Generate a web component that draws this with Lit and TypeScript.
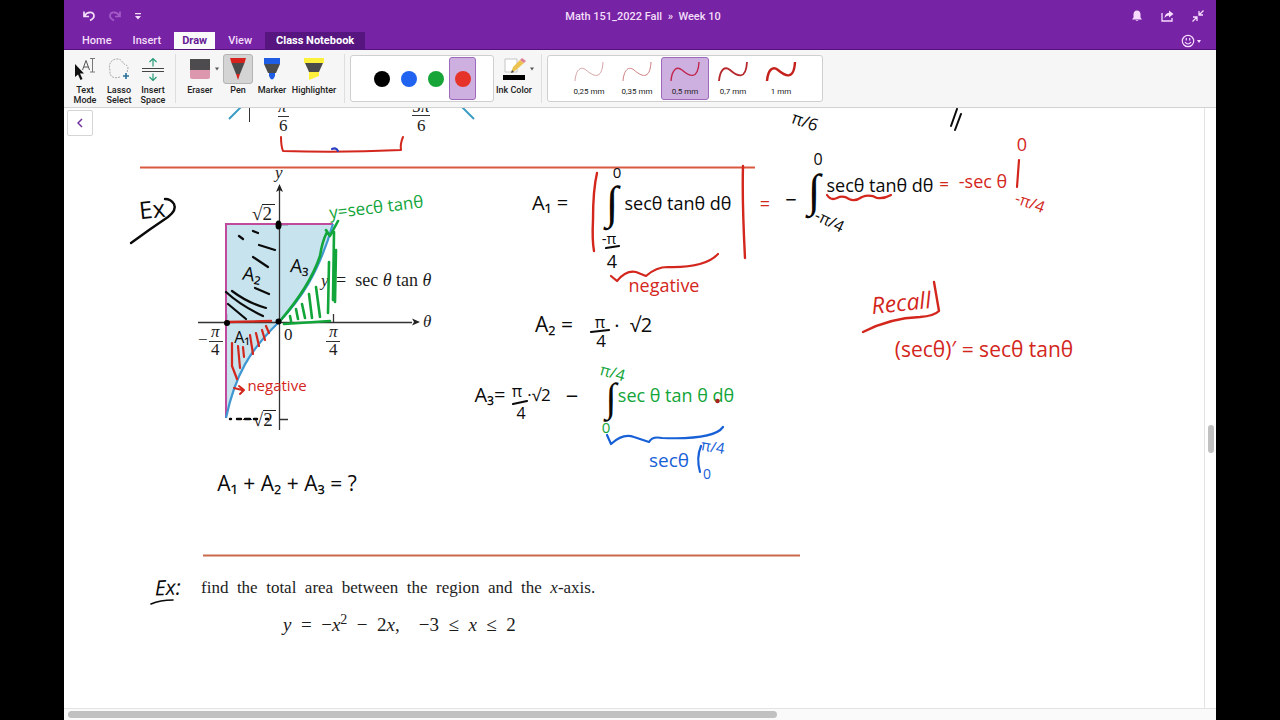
import { LitElement, html, svg, css } from "lit";
import { customElement, state } from "lit/decorators.js";

type Label = { x: number; y: number; s: number; t: string; c?: string; k?: string; r?: number };

const RED = "#d3261c";
const BLACK = "#0a0a0a";
const GREEN = "#12a53a";
const BLUE = "#1760d6";

// Handwritten labels: centre x, baseline y, size.
const INK: Label[] = [
  { x: 803, y: 127, s: 17, t: "π/6", r: 20 },
  { x: 153, y: 218, s: 24, t: "Ex", r: -6 },
  { x: 251, y: 281, s: 19, t: "A₂", r: 10 },
  { x: 299, y: 273, s: 19, t: "A₃", r: 6 },
  { x: 242, y: 343, s: 16, t: "A₁" },
  { x: 377, y: 213, s: 17, t: "y=secθ tanθ", c: GREEN, r: -7 },
  { x: 277, y: 391, s: 15, t: "negative", c: RED },
  { x: 287, y: 491, s: 21, t: "A₁ + A₂ + A₃ = ?" },
  { x: 550, y: 210, s: 20, t: "A₁ =" },
  { x: 617, y: 178, s: 15, t: "0" },
  { x: 678, y: 210, s: 18, t: "secθ tanθ dθ" },
  { x: 609, y: 244, s: 15, t: "-π" },
  { x: 612, y: 268, s: 18, t: "4" },
  { x: 664, y: 292, s: 18, t: "negative", c: RED },
  { x: 765, y: 210, s: 18, t: "=", c: RED },
  { x: 791, y: 207, s: 20, t: "−" },
  { x: 818, y: 165, s: 16, t: "0" },
  { x: 827, y: 226, s: 16, t: "-π/4", r: 26 },
  { x: 880, y: 192, s: 18, t: "secθ tanθ dθ" },
  { x: 944, y: 190, s: 17, t: "=", c: RED },
  { x: 983, y: 188, s: 18, t: "-sec θ", c: RED },
  { x: 1022, y: 151, s: 18, t: "0", c: RED },
  { x: 1028, y: 208, s: 16, t: "-π/4", c: RED, r: 20 },
  { x: 554, y: 332, s: 21, t: "A₂ =" },
  { x: 600, y: 328, s: 16, t: "π" },
  { x: 601, y: 347, s: 17, t: "4" },
  { x: 617, y: 333, s: 20, t: "·" },
  { x: 641, y: 332, s: 20, t: "√2" },
  { x: 490, y: 402, s: 20, t: "A₃=" },
  { x: 517, y: 397, s: 16, t: "π" },
  { x: 521, y: 419, s: 16, t: "4" },
  { x: 539, y: 401, s: 17, t: "·√2" },
  { x: 572, y: 404, s: 22, t: "−" },
  { x: 611, y: 378, s: 16, t: "π/4", c: GREEN, r: 16 },
  { x: 676, y: 402, s: 18, t: "sec θ tan θ dθ", c: GREEN },
  { x: 606, y: 433, s: 15, t: "0", c: GREEN },
  { x: 669, y: 467, s: 19, t: "secθ", c: BLUE },
  { x: 712, y: 452, s: 15, t: "π/4", c: BLUE, r: 10 },
  { x: 707, y: 479, s: 14, t: "0", c: BLUE },
  { x: 902, y: 311, s: 23, t: "Recall", c: RED, k: "slant", r: -6 },
  { x: 984, y: 357, s: 21, t: "(secθ)′ = secθ tanθ", c: RED },
  { x: 168, y: 595, s: 21, t: "Ex:", k: "thin slant", r: -2 },
];

// Printed labels, start-aligned.
const PRINT: Label[] = [
  { x: 278, y: 112, s: 17, t: "π", k: "it" },
  { x: 279, y: 131, s: 17, t: "6" },
  { x: 412, y: 112, s: 17, t: "5π" },
  { x: 417, y: 131, s: 17, t: "6" },
  { x: 275, y: 178, s: 17, t: "y", k: "it" },
  { x: 252, y: 220, s: 19, t: "√2" },
  { x: 242, y: 426, s: 19, t: "−√2" },
  { x: 321, y: 286, s: 17, t: "y", k: "it" },
  { x: 423, y: 327, s: 17, t: "θ", k: "it" },
  { x: 284, y: 340, s: 17, t: "0" },
  { x: 198, y: 345, s: 17, t: "−" },
  { x: 211, y: 337, s: 17, t: "π", k: "it" },
  { x: 211, y: 355, s: 17, t: "4" },
  { x: 329, y: 337, s: 17, t: "π", k: "it" },
  { x: 329, y: 355, s: 17, t: "4" },
];

// Pen strokes: path, colour, width.
const STROKES: [string, string, number][] = [
  ["M281 137Q281 146 283 151Q340 153 401 150Q400 144 403 137", RED, 2],
  ["M332 149Q336 147 338 151", "#2b3fc4", 2],
  ["M957 109L951 126M961 114L955 130", BLACK, 2],
  ["M131 243Q150 229 168 217Q177 210 174 204Q171 199 165 199", BLACK, 2.4],
  ["M239 236L243 239M253 231L258 233M259 245L275 250M253 257L268 267M255 288L269 294M232 291Q248 303 266 308M226 292Q240 305 263 316M228 304Q240 314 246 319", BLACK, 2.2],
  ["M327 232Q322 242 320 256Q310 286 280 321M326 230L330 236L338 221M334 232L333 300M336 250L335 302M329 262L328 313M316 287L320 317M309 294L312 318M302 304L305 318M296 309L298 319M290 316L291 321M284 324L330 321", GREEN, 2.6],
  ["M228 322L271 321", RED, 2.4],
  ["M232 343L232 366L237 379M238 346L240 368M243 347L244 357M250 335L253 354M256 333L259 346M262 330L265 340M266 326L269 333", RED, 2.2],
  ["M234 388L242 390M239 386L244 390L240 394", RED, 2],
  ["M230 419L231 419M237 419L241 419M245 419L250 419M254 419L257 419M266 419L268 419", BLACK, 2.4],
  ["M597 173Q593 190 593 220Q592 240 594 251", RED, 2.4],
  ["M743 166Q742 200 745 258", RED, 2.4],
  ["M606 248L619 246", BLACK, 2.2],
  ["M611 276L617 281Q626 270 636 272L646 276Q656 267 668 267Q705 268 718 254", RED, 2.2],
  ["M827 195Q831 201 837 198Q843 195 849 199Q855 202 862 197Q870 194 877 198Q884 199 891 195", RED, 2.2],
  ["M1019 160L1017 187", RED, 2.2],
  ["M591 332L609 330", BLACK, 2.2],
  ["M513 404L527 401", BLACK, 2.2],
  ["M607 435L611 444Q623 433 634 437L649 442Q652 436 662 438Q714 440 723 427", BLUE, 2.2],
  ["M701 446Q696 458 700 472", BLUE, 2.2],
  ["M863 332Q890 318 920 317Q934 316 939 311L934 282", RED, 2.4],
  ["M151 604Q160 600 173 600", BLACK, 1.6],
];

// Integral signs: x, y, size, colour.
const INTEGRALS: Label[] = [
  { x: 612, y: 218, s: 46, t: "∫" },
  { x: 814, y: 206, s: 46, t: "∫" },
  { x: 611, y: 411, s: 40, t: "∫" },
];

@customElement("app-root")
export class AppRoot extends LitElement {
  @state() tab = "Draw";
  @state() tool = "Pen";
  @state() ink = "Red";
  @state() nib = "0,5 mm";

  static styles = css`
    :host { display: block; }
    * { box-sizing: border-box; }
    button { font: inherit; color: inherit; background: none; border: 0; padding: 0; margin: 0; }
    svg { display: block; }
    .screen { height: 100vh; background: #000; padding: 0 5%; font-family: Roboto, "Liberation Sans", sans-serif; }
    .window { height: 100%; display: flex; flex-direction: column; background: #fff; overflow: hidden; }
    .head { background: #7723a5; color: #f3def9; border-bottom: 1px solid #511279; }
    .title { display: grid; grid-template-columns: 1fr auto 1fr; align-items: center; height: 32px; padding: 0 12px 0 18px; font-size: 11px; font-weight: 500; }
    .title h1 { margin: 0; font: inherit; }
    .group { display: flex; align-items: center; gap: 12px; }
    .end { justify-content: flex-end; gap: 18px; }
    .tabs { display: flex; align-items: stretch; height: 17px; padding: 0 14px 0 10px; font-size: 11px; font-weight: 500; }
    .tabs button { padding: 0 8px; line-height: 17px; margin-right: 5px; }
    .tabs .on { background: #fafafa; color: #671b96; font-weight: 700; }
    .tabs .class { background: #571580; color: #fff; padding: 0 11px; font-weight: 700; }
    .tabs .smile { margin-left: auto; margin-right: 0; padding: 0; }
    .ribbon { display: flex; height: 58px; flex: none; background: #f6f6f6; border-bottom: 1px solid #d2d2d2; padding: 4px 4px 0; font-size: 9px; line-height: 10px; color: #222; font-weight: 500; overflow: hidden; }
    .tool { display: flex; flex-direction: column; align-items: center; width: 34px; white-space: nowrap; }
    .tool .pic { height: 30px; width: 30px; display: grid; place-items: center; margin-bottom: 1px; border: 1px solid transparent; border-radius: 3px; }
    .tool.on .pic { background: #d4d4d4; border-color: #b4b4b4; }
    .tool.mid { width: 38px; }
    .tool.wide { width: 50px; }
    .tool.ink { width: 40px; }
    .rule { width: 1px; background: #dedede; margin: 0 5px 4px; }
    .caret { width: 6px; margin-left: -4px; padding-top: 13px; height: 20px; }
    .box { display: flex; align-items: center; height: 47px; background: #fff; border: 1px solid #cfcfcf; border-radius: 3px; margin-top: 1px; }
    .colors { padding: 0 17px; }
    .swatch { width: 27px; height: 43px; display: grid; place-items: center; border: 1px solid transparent; border-radius: 3px; }
    .dot { width: 16px; height: 16px; border-radius: 50%; }
    .nibs { padding: 0 17px; font-size: 8px; font-weight: 400; }
    .nib { width: 48px; height: 43px; display: flex; flex-direction: column; align-items: center; gap: 4px; border: 1px solid transparent; border-radius: 3px; padding-top: 1px; }
    .box .on { background: #cdb0e0; border-color: #9d69bd; }
    .work { flex: 1; display: flex; min-height: 0; }
    .page { flex: 1; min-width: 0; position: relative; }
    .canvas { width: 100%; height: 100%; overflow: hidden; }
    .back { position: absolute; left: 3px; top: 2px; width: 26px; height: 26px; background: #fff; border: 1px solid #d5d5d5; border-radius: 2px; display: grid; place-items: center; }
    .vbar { width: 12px; border-left: 1px solid #e3e3e3; display: grid; grid-template-rows: 316fr 28fr 255fr; justify-items: center; }
    .vthumb { grid-row: 2; width: 6px; background: #c1c1c1; border-radius: 3px; }
    .hbar { height: 12px; flex: none; border-top: 1px solid #e3e3e3; background: #fafafa; padding: 2px 4px; }
    .hthumb { width: 62%; height: 7px; background: #c1c1c1; border-radius: 4px; }
    .print { font-family: "Liberation Serif", serif; fill: #1c1c1c; white-space: pre; }
    .it { font-style: italic; }
    .hand { font-family: "Open Sans", sans-serif; font-weight: 500; text-anchor: middle; }
    .slant { font-style: italic; }
    .thin { font-weight: 400; }
    .int { font-family: "Liberation Serif", "DejaVu Serif", serif; text-anchor: middle; }
    .stroke { fill: none; stroke-linecap: round; stroke-linejoin: round; }
  `;

  private toolButton(name: string, lines: string[], pic: unknown, size = "") {
    return html`<button class="tool ${size} ${this.tool === name ? "on" : ""}" @click=${() => (this.tool = name)}>
      <span class="pic">${pic}</span>${lines.map((l) => html`<span>${l}</span>`)}
    </button>`;
  }

  private pen(fill: string, shape: string, body: string, tip: string) {
    return html`<svg width="22" height="24" viewBox="0 0 22 24">
      <path d=${body} fill="#4b4b4b" /><path d=${shape} fill=${fill} /><path d=${tip} fill=${fill} />
    </svg>`;
  }

  private caret(c: string) {
    return html`<svg width="4" height="4" viewBox="0 0 5 4"><path d="M0 0H5L2.5 4Z" fill=${c} /></svg>`;
  }

  private canvas() {
    return html`<svg class="canvas" role="img" aria-label="Notebook page">
      <g transform="translate(-64 -108)">
        <path d="M140 167.500H755" stroke="#d9593f" stroke-width="1.800" />
        <path d="M203 555.500H800" stroke="#c8694a" stroke-width="2" />
        <path d="M226 224H333C318 275 300 300 279 322C250 350 235 375 226 418Z" fill="#c6e3ee" />
        <path d="M249.500 107V122M278 116.500H289M412 115.500H430M209 341.500H223M326 341.500H340" stroke="#333" />
        <path d="M262 204.500H275M263 410.500H276" stroke="#222" />
        <path d="M229 119L241 107M462 107L474 119" stroke="#3a9cc4" stroke-width="2" />
        <path d="M279.500 430V190M198 322.500H412M333.500 314V322M279 224.500H288M279 419.500H288M226.500 314V322" stroke="#333" stroke-width="1.300" />
        <path d="M279.500 184L283 192L279.500 190L276 192ZM420 322L412 318.500L414 322L412 325.500Z" fill="#222" />
        <path d="M333 224H226V418" fill="none" stroke="#c04a9c" stroke-width="2" />
        <path d="M333 224C318 275 300 300 279 322C250 350 235 375 226 418" fill="none" stroke="#3f97d2" stroke-width="2.200" />
        ${PRINT.map((p) => svg`<text class="print ${p.k ?? ""}" x=${p.x} y=${p.y} font-size=${p.s}>${p.t}</text>`)}
        <text class="print" x="336" y="286" font-size="18">=  sec <tspan class="it">θ</tspan> tan <tspan class="it">θ</tspan></text>
        <text class="print" x="201" y="593" font-size="17">find  the  total  area  between  the  region  and  the  <tspan class="it">x</tspan>-axis.</text>
        <text class="print" x="283" y="631" font-size="19"><tspan class="it">y</tspan>  =  −<tspan class="it">x</tspan><tspan dy="-7" font-size="14">2</tspan><tspan dy="7">  −  2</tspan><tspan class="it">x</tspan>,    −3  ≤  <tspan class="it">x</tspan>  ≤  2</text>
        ${STROKES.map(([d, c, w]) => svg`<path class="stroke" d=${d} stroke=${c} stroke-width=${w} />`)}
        <ellipse cx="278.500" cy="225" rx="3" ry="4.500" /><circle cx="227" cy="323" r="3" /><circle cx="278.500" cy="321.500" r="3" />
        ${INTEGRALS.map((p) => svg`<text class="int" x=${p.x} y=${p.y} font-size=${p.s} fill=${BLACK}>${p.t}</text>`)}
        ${INK.map((p) => svg`<text class="hand ${p.k ?? ""}" x=${p.x} y=${p.y} font-size=${p.s} fill=${p.c ?? BLACK} transform="rotate(${p.r ?? 0} ${p.x} ${p.y})">${p.t}</text>`)}
        <circle cx="717.500" cy="401" r="2.200" fill="#a8201c" />
      </g>
    </svg>`;
  }

  render() {
    const colors = [["Black", "#000"], ["Blue", "#2063f0"], ["Green", "#18a538"], ["Red", "#e6332a"]];
    const nibs: [string, number, string][] = [["0,25 mm", 0.8, "#c98d92"], ["0,35 mm", 1, "#cf7d80"], ["0,5 mm", 1.4, "#c1254b"], ["0,7 mm", 1.8, "#b5282b"], ["1 mm", 2.4, "#c4211c"]];
    return html`<div class="screen"><div class="window">
      <header class="head">
        <div class="title">
          <div class="group">
            <button aria-label="Undo"><svg width="14" height="12" viewBox="0 0 14 12" fill="none" stroke="#f3def9" stroke-width="1.700"><path d="M2 1.500V6.500H7M2.500 6C5 1.500 12 1 12 6C12 8.500 10 9.500 8 10.500" /></svg></button>
            <button aria-label="Redo"><svg width="14" height="12" viewBox="0 0 14 12" fill="none" stroke="#a55cc8" stroke-width="1.700"><path d="M12 1.500V6.500H7M11.500 6C9 1.500 2 1 2 6C2 8.500 4 9.500 6 10.500" /></svg></button>
            <button aria-label="Customize"><svg width="8" height="7" viewBox="0 0 8 7"><path d="M1 0H7V1.200H1ZM1 3H7L4 6.500Z" fill="#f3def9" /></svg></button>
          </div>
          <h1>Math 151_2022 Fall &nbsp;»&nbsp; Week 10</h1>
          <div class="group end">
            <button aria-label="Notifications"><svg width="12" height="12" viewBox="0 0 12 12" fill="#f7dcff"><path d="M6 0.500C3.500 0.500 2.500 2.500 2.500 4.500V7.500L1 9.500H11L9.500 7.500V4.500C9.500 2.500 8.500 0.500 6 0.500ZM4.500 10.200H7.500Q6 12 4.500 10.200Z" /></svg></button>
            <button aria-label="Share"><svg width="13" height="12" viewBox="0 0 13 12"><path d="M1 3V11H11V8" fill="none" stroke="#f7dcff" stroke-width="1.300" /><path d="M8 0.500L12.500 4L8 7.500V5.500Q5 5.500 3.500 8Q4 3 8 2.700Z" fill="#f7dcff" /></svg></button>
            <button aria-label="Exit full screen"><svg width="12" height="12" viewBox="0 0 12 12" fill="none" stroke="#f7dcff" stroke-width="1.300"><path d="M11.500 0.500L7 5M7 1V5H11M0.500 11.500L5 7M1 7H5V11" /></svg></button>
          </div>
        </div>
        <nav class="tabs">
          ${["Home", "Insert", "Draw", "View"].map((t) => html`<button class=${this.tab === t ? "on" : ""} @click=${() => (this.tab = t)}>${t}</button>`)}
          <button class="class">Class Notebook</button>
          <button class="smile" aria-label="Feedback"><svg width="21" height="14" viewBox="0 0 21 14"><g fill="none" stroke="#f7dcff" stroke-width="1.200"><circle cx="7" cy="7" r="5.700" /><path d="M4 8Q7 12 10 8M5.300 4V6.500M8.700 4V6.500" /></g><path d="M16 6H20L18 9Z" fill="#f7dcff" /></svg></button>
        </nav>
      </header>
      <div class="ribbon">
        ${this.toolButton("Text", ["Text", "Mode"], html`<svg width="22" height="24" viewBox="0 0 22 24"><path d="M8.500 13L12 3.500L15.500 13M9.800 10H14.200" fill="none" stroke="#555" /><path d="M16 1.500H21M16 15H21M18.500 1.500V15" fill="none" stroke="#777" /><path d="M1 7V20L4 17.500L6.500 23L8.500 22L6 16.500H10Z" fill="#111" /></svg>`)}
        ${this.toolButton("Lasso", ["Lasso", "Select"], html`<svg width="22" height="24" viewBox="0 0 22 24"><path d="M12 20C6 22 1 20 2 13C0 8 3 2 9 2C15 2 13 6 18 8C21 9 20 12 19 15" fill="none" stroke="#aaa" stroke-dasharray="2 1" /><path d="M18 16V22M15 19H21" stroke="#286f99" stroke-width="1.600" /></svg>`)}
        ${this.toolButton("Space", ["Insert", "Space"], html`<svg width="22" height="24" viewBox="0 0 22 24" fill="none"><path d="M0 11.500H22M0 14.500H22" stroke="#444" /><path d="M11 9.500V2M7.500 5L11 1.500L14.500 5M11 16.500V23M7.500 20L11 23.500L14.500 20" stroke="#2a9b78" stroke-width="1.200" /></svg>`)}
        <div class="rule"></div>
        ${this.toolButton("Eraser", ["Eraser"], html`<svg width="20" height="22" viewBox="0 0 20 22"><path d="M0 1H20V12H0Z" fill="#4d4b4d" /><path d="M0 12H20V19Q20 21 18 21H2Q0 21 0 19Z" fill="#dc97af" /></svg>`, "mid")}
        <span class="caret">${this.caret("#555")}</span>
        ${this.toolButton("Pen", ["Pen"], this.pen("#d7221e", "M3 1H19L17.500 6H4.500Z", "M4.500 6H17.500L13 17H9Z", "M9 17H13L11 23Z"))}
        ${this.toolButton("Marker", ["Marker"], this.pen("#1f5ce4", "M3 1H19V7H3Z", "M3 7H19L15 16H7Z", "M8 16H14V19Q11 26 8 19Z"))}
        ${this.toolButton("Highlighter", ["Highlighter"], this.pen("#fdf13c", "M1 1H21V6H1Z", "M2 6H20L16 15H6Z", "M6 15H16V19L6 23Z"), "wide")}
        <div class="rule"></div>
        <div class="box colors" role="group" aria-label="Ink colors">
          ${colors.map(([n, c]) => html`<button class="swatch ${this.ink === n ? "on" : ""}" aria-label=${n} @click=${() => (this.ink = n)}><span class="dot" style="background:${c}"></span></button>`)}
        </div>
        ${this.toolButton("Ink", ["Ink Color"], html`<svg width="24" height="24" viewBox="0 0 24 24"><path d="M3 2H15V15H3Z" fill="#fff" stroke="#c5c5c5" /><path d="M9 16L11 10L18 3L22 6L14 13Z" fill="#edc34f" /><path d="M18 3L20 1L24 4L22 6Z" fill="#df7f96" /><path d="M9 16L10 13L12 15Z" fill="#444" /><path d="M1 18H23V23H1Z" fill="#000" /></svg>`, "ink")}
        <span class="caret">${this.caret("#555")}</span>
        <div class="rule"></div>
        <div class="box nibs" role="group" aria-label="Thickness">
          ${nibs.map(([n, w, c]) => html`<button class="nib ${this.nib === n ? "on" : ""}" @click=${() => (this.nib = n)}>
            <svg width="32" height="24" viewBox="0 0 32 24"><path d="M2 22C3 10 8 7 13 11C20 17 29 22 30 3" fill="none" stroke=${c} stroke-width=${w} /></svg><span>${n}</span></button>`)}
        </div>
      </div>
      <main class="work">
        <div class="page">
          ${this.canvas()}
          <button class="back" aria-label="Back"><svg width="6" height="10" viewBox="0 0 6 10"><path d="M5 1L1 5L5 9" fill="none" stroke="#7030a0" stroke-width="1.500" /></svg></button>
        </div>
        <div class="vbar"><div class="vthumb"></div></div>
      </main>
      <div class="hbar"><div class="hthumb"></div></div>
    </div></div>`;
  }
}
